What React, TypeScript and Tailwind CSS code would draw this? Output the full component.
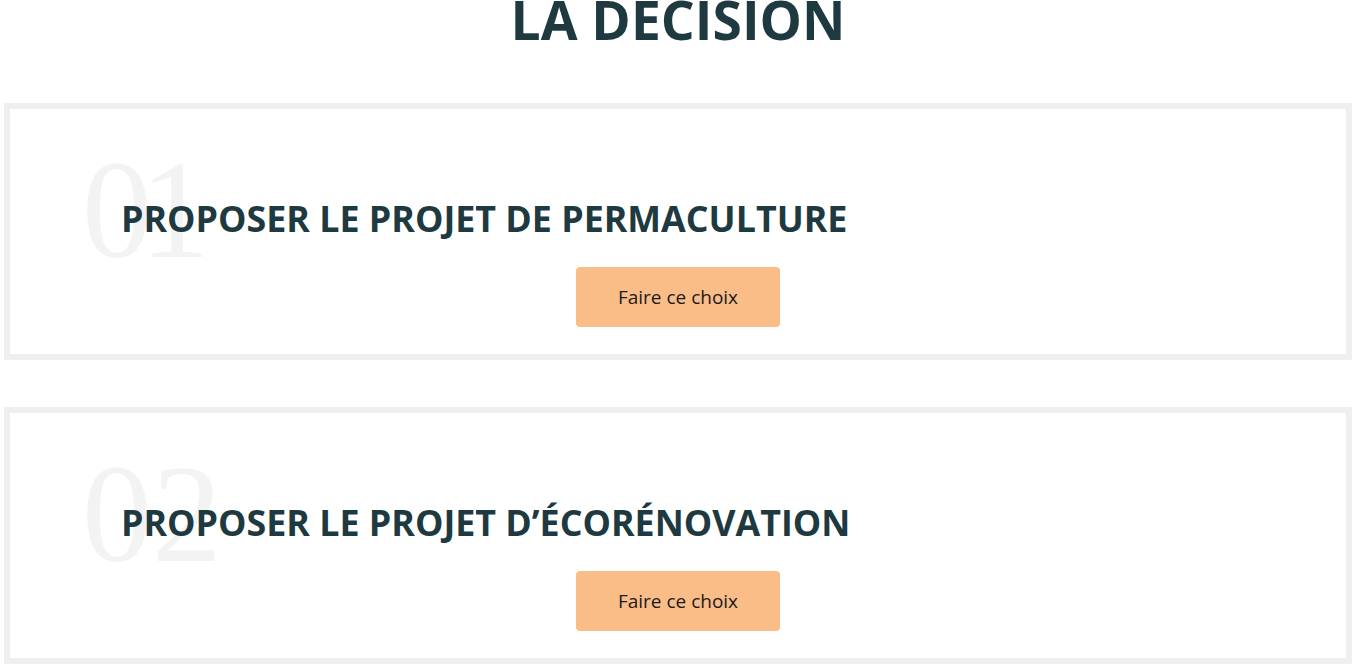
const choices = [
  { num: "01", title: "PROPOSER LE PROJET DE PERMACULTURE" },
  { num: "02", title: "PROPOSER LE PROJET D’ÉCORÉNOVATION" },
];

const ChoiceCard = ({ num, title }: { num: string; title: string }) => (
  <section className="relative border-[6px] border-[#efefef] bg-white pb-[27px] pl-[111px] pr-[109px] pt-[88px]">
    <span
      aria-hidden
      className="pointer-events-none absolute left-[72px] top-[31px] select-none text-[140px] leading-[140px] text-[#f3f3f3] [font-family:'Liberation_Serif',serif]"
    >
      {num.split("").map((d, i) => (
        <span key={i} className={d === "1" ? "-ml-[12px]" : ""}>
          {d}
        </span>
      ))}
    </span>
    <h3 className="relative text-[35.8px] font-bold leading-[43px] text-[#1e3a40]">
      {title}
    </h3>
    <div className="mt-[27px] flex justify-center">
      <button
        className="-ml-[100px] -mr-[98px] h-[60px] w-[204px] rounded-[4px] bg-[#fbbd88] text-[19px] text-[#1a1a1a]"
        type="button"
      >
        Faire ce choix
      </button>
    </div>
  </section>
);

export default function App() {
  return (
    <main className="min-h-[672px] overflow-hidden bg-white pl-[4px] pr-[8px] [font-family:'Open_Sans',sans-serif]">
      <h2 className="-mt-[7px] mb-[56px] text-center text-[53.4px] font-bold leading-[54px] text-[#1e3a40]">
        LA DECISION
      </h2>
      <div className="flex flex-col gap-[47px]">
        {choices.map((c) => (
          <ChoiceCard key={c.num} num={c.num} title={c.title} />
        ))}
      </div>
    </main>
  );
}
